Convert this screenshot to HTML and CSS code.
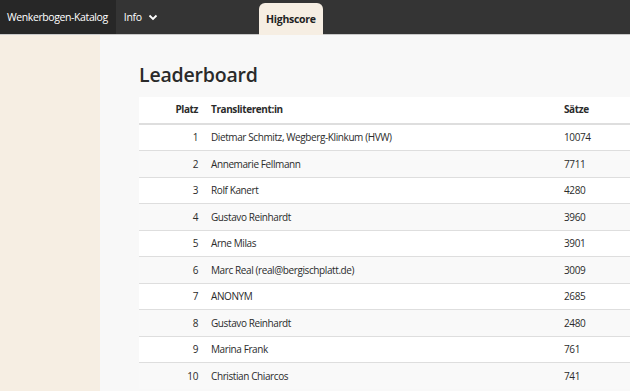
FILE: index.html
```html
<!DOCTYPE html>
<html lang="de">
<head>
  <meta charset="UTF-8" />
  <meta name="viewport" content="width=device-width, initial-scale=1.0" />
  <title>Highscore | Wenkerbogen-Katalog</title>
  <link rel="stylesheet" href="styles.css">
</head>
<body>
  <nav class="navbar">
    <a class="brand" href="#">Wenkerbogen-Katalog</a>
    <a class="nav-item" href="#">Info
      <svg class="chevron" width="10" height="7" viewBox="0 0 10 7"><path d="M1.5 1.5 L5 5 L8.5 1.5" fill="none" stroke="#fff" stroke-width="1.8"/></svg>
    </a>
    <a class="nav-tab active" href="#">Highscore</a>
  </nav>

  <div class="page">
    <aside class="sidebar"></aside>
    <main class="content">
      <h1>Leaderboard</h1>
      <table class="board">
        <thead>
          <tr>
            <th class="rank">Platz</th>
            <th class="name">Transliterent:in</th>
            <th class="count">Sätze</th>
          </tr>
        </thead>
        <tbody>
          <tr><td class="rank">1</td><td>Dietmar Schmitz, Wegberg-Klinkum (HVW)</td><td>10074</td></tr>
          <tr><td class="rank">2</td><td>Annemarie Fellmann</td><td>7711</td></tr>
          <tr><td class="rank">3</td><td>Rolf Kanert</td><td>4280</td></tr>
          <tr><td class="rank">4</td><td>Gustavo Reinhardt</td><td>3960</td></tr>
          <tr><td class="rank">5</td><td>Arne Milas</td><td>3901</td></tr>
          <tr><td class="rank">6</td><td>Marc Real (real@bergischplatt.de)</td><td>3009</td></tr>
          <tr><td class="rank">7</td><td>ANONYM</td><td>2685</td></tr>
          <tr><td class="rank">8</td><td>Gustavo Reinhardt</td><td>2480</td></tr>
          <tr><td class="rank">9</td><td>Marina Frank</td><td>761</td></tr>
          <tr><td class="rank">10</td><td>Christian Chiarcos</td><td>741</td></tr>
        </tbody>
      </table>
    </main>
  </div>
</body>
</html>
```

FILE: styles.css
```css
:root {
  --nav-bg: #343434;
  --brand-bg: #272727;
  --beige: #f6eee3;
  --main-bg: #f8f8f8;
  --text: #2b2b2b;
  --border: #dedede;
}

html, body {
  margin: 0;
  height: 100%;
  overflow: hidden;
}

body {
  font-family: "Open Sans", "Noto Sans", sans-serif;
  color: var(--text);
  background-color: var(--main-bg);
  display: flex;
  flex-direction: column;
}

a {
  text-decoration: none;
}

.navbar {
  display: flex;
  align-items: stretch;
  height: 34px;
  background-color: var(--nav-bg);
  border-bottom: 1px solid #c8c8c8;
  flex-shrink: 0;
}

.brand {
  display: flex;
  align-items: center;
  padding: 0 8px 0 7px;
  background-color: var(--brand-bg);
  color: #fff;
  font-size: 10.5px;
  letter-spacing: -0.4px;
}

.nav-item {
  display: flex;
  align-items: center;
  gap: 6px;
  padding: 0 8px;
  color: #fff;
  font-size: 10.5px;
  letter-spacing: -0.3px;
}

.chevron {
  margin-top: 1px;
}

.nav-tab {
  display: flex;
  align-items: center;
  justify-content: center;
  margin: 3px 0 -1px 93px;
  width: 64px;
  border-radius: 6px 6px 0 0;
  color: #222;
  font-size: 10.5px;
  font-weight: 700;
  letter-spacing: -0.3px;
}

.nav-tab.active {
  background-color: var(--beige);
}

.page {
  flex: 1;
  display: flex;
}

.sidebar {
  width: 100px;
  flex-shrink: 0;
  background-color: var(--beige);
}

.content {
  flex: 1;
  padding: 27px 0 0 39px;
  min-width: 0;
}

.content h1 {
  margin: 0 0 9px;
  font-size: 19.5px;
  font-weight: 600;
  line-height: 26px;
  color: #2a2a2a;
  letter-spacing: -0.2px;
}

.board {
  width: 600px;
  border-collapse: collapse;
  background-color: #fff;
  font-size: 10px;
  letter-spacing: -0.4px;
}

.board th,
.board td {
  padding: 5.5px 8px;
  line-height: 14.5px;
  text-align: left;
  white-space: nowrap;
}

.board th {
  font-weight: 700;
  border-bottom: 2px solid var(--border);
  padding-top: 5px;
  padding-bottom: 6px;
  height: 14.5px;
}

.board td {
  border-top: 1px solid var(--border);
}

.board tbody tr:first-child td {
  border-top: none;
}

.board tbody tr:nth-child(even) {
  background-color: #f9f9f9;
}

.board .rank {
  width: 51px;
  text-align: right;
  padding-right: 5px;
}

.board .name {
  width: 337px;
}
```
